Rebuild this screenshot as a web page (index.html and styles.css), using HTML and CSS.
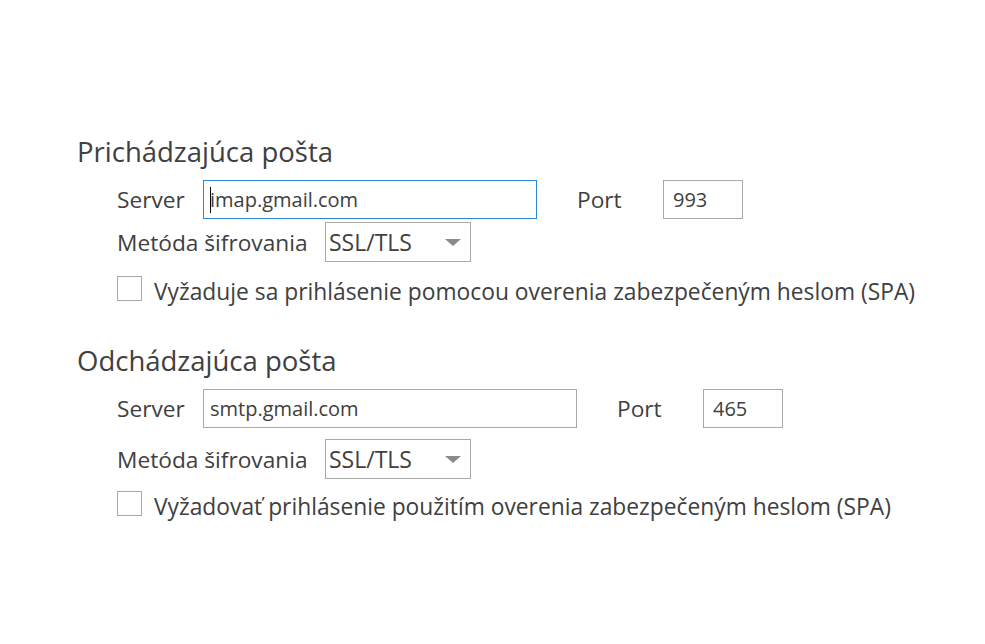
FILE: index.html
```html
<!DOCTYPE html>
<html lang="sk">

<head>
    <meta charset="UTF-8">
    <meta name="viewport" content="width=device-width, initial-scale=1.0">
    <title>Nastavenia servera</title>
    <link rel="stylesheet" href="styles.css">
</head>

<body>
    <div class="page">
        <section class="section section-in">
            <h2>Prichádzajúca pošta</h2>
            <div class="row row-server">
                <span class="label label-server">Server</span>
                <div class="field field-server field-focus"><span class="caret"></span>imap.gmail.com</div>
                <span class="label label-port">Port</span>
                <div class="field field-port">993</div>
            </div>
            <div class="row row-method">
                <span class="label label-method">Metóda šifrovania</span>
                <div class="select">
                    <span>SSL/TLS</span>
                    <span class="arrow"></span>
                </div>
            </div>
            <label class="row row-check">
                <span class="checkbox"></span>
                <span class="check-text">Vyžaduje sa prihlásenie pomocou overenia zabezpečeným heslom (SPA)</span>
            </label>
        </section>

        <section class="section section-out">
            <h2>Odchádzajúca pošta</h2>
            <div class="row row-server">
                <span class="label label-server">Server</span>
                <div class="field field-server field-wide">smtp.gmail.com</div>
                <span class="label label-port">Port</span>
                <div class="field field-port">465</div>
            </div>
            <div class="row row-method">
                <span class="label label-method">Metóda šifrovania</span>
                <div class="select">
                    <span>SSL/TLS</span>
                    <span class="arrow"></span>
                </div>
            </div>
            <label class="row row-check">
                <span class="checkbox"></span>
                <span class="check-text">Vyžadovať prihlásenie použitím overenia zabezpečeným heslom (SPA)</span>
            </label>
        </section>
    </div>
</body>

</html>
```

FILE: styles.css
```css
:root {
    --text: #404040;
    --border: #a9a9a9;
    --focus: #2b88d8;
}

html,
body {
    min-height: 100%;
}

body {
    margin: 0;
    background: #ffffff;
    color: var(--text);
    font-family: "Open Sans", "Noto Sans", sans-serif;
}

.page {
    padding: 132px 0 120px 77px;
}

.section h2 {
    margin: 0;
    font-size: 27.5px;
    font-weight: 400;
    line-height: 40px;
}

.section-out {
    margin-top: 37px;
}

.row {
    display: flex;
    align-items: center;
    margin-left: 40px;
}

.row-server {
    margin-top: 8px;
    height: 39px;
}

.section-in .row-method {
    margin-top: 3px;
}

.section-out .row-method {
    margin-top: 11px;
}

.row-method {
    height: 40px;
}

.row-check {
    align-items: flex-start;
}

.section-in .row-check {
    margin-top: 14px;
}

.section-out .row-check {
    margin-top: 12px;
}

.label {
    font-size: 22.7px;
}

.label-server {
    width: 86px;
}

.label-port {
    margin-left: 40px;
    width: 86px;
}

.label-method {
    width: 208px;
}

.field {
    box-sizing: border-box;
    height: 39px;
    border: 1px solid var(--border);
    display: flex;
    align-items: center;
    padding-left: 6px;
    font-size: 20px;
}

.field-server {
    width: 334px;
}

.field-wide {
    width: 374px;
}

.field-port {
    width: 80px;
    padding-left: 9px;
}

.field-focus {
    border-color: var(--focus);
}

.caret {
    width: 1px;
    height: 26px;
    background: #000000;
    margin-right: -1px;
}

.select {
    box-sizing: border-box;
    width: 146px;
    height: 40px;
    border: 1px solid var(--border);
    display: flex;
    align-items: center;
    justify-content: space-between;
    padding: 0 9px 0 3px;
    font-size: 23px;
}

.arrow {
    width: 0;
    height: 0;
    border-left: 8px solid transparent;
    border-right: 8px solid transparent;
    border-top: 7px solid #8a8a8a;
}

.checkbox {
    box-sizing: border-box;
    flex: none;
    width: 25px;
    height: 25px;
    border: 1px solid var(--border);
    background: #ffffff;
}

.check-text {
    margin-left: 12px;
    padding-top: 3px;
    font-size: 22.8px;
    line-height: 25px;
}
```
